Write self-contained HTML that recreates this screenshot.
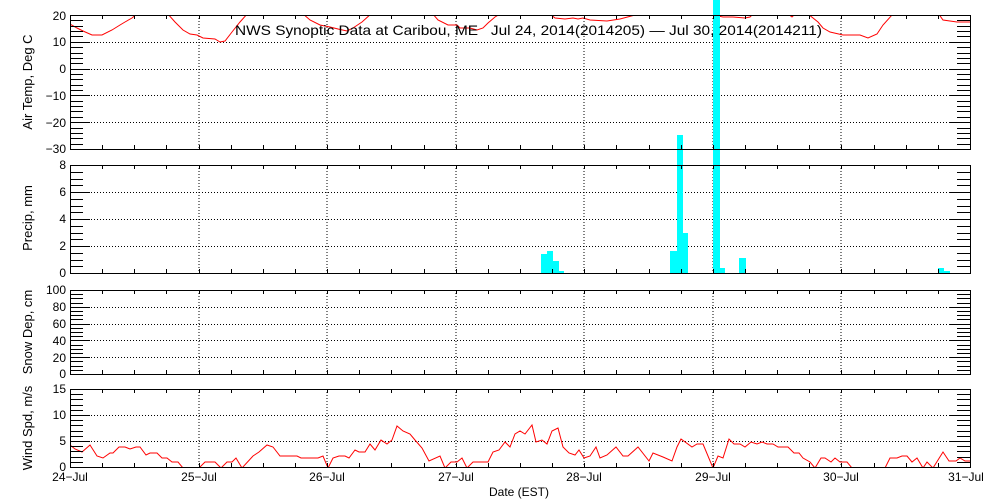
<!DOCTYPE html>
<html><head><meta charset="utf-8"><style>
html,body{margin:0;padding:0;background:#fff;width:1000px;height:500px;overflow:hidden}
svg text{font-family:"Liberation Sans",sans-serif;fill:#000}
</style></head><body>
<svg id="s" width="1000" height="500" viewBox="0 0 1000 500" xmlns="http://www.w3.org/2000/svg">
<defs>
<clipPath id="c1"><rect x="70" y="15" width="900" height="134"/></clipPath>
<clipPath id="c4"><rect x="70" y="389" width="900" height="78"/></clipPath>
</defs>
<g id="grid" stroke="#000" stroke-width="1" fill="none" shape-rendering="crispEdges"></g>
<polyline clip-path="url(#c1)" fill="none" stroke="#f00" stroke-width="1" points="70,24 77,28 83,31 92,35 102,35 112,30 120,25 125,22 132,18 138,13 167,13 175,22 183,30 190,34 197,35 203,38 215,39 220,42 225,41 232,32 240,22 248,13 302,13 310,20 320,25 330,27 338,29 347,31 353,28 362,22 372,13 432,13 438,20 448,25 457,25 460,28 470,28 477,30 483,28 488,23 495,17 500,14 550,14 555,18 565,19 573,18 578,19 583,18 590,20 607,21 620,19 635,15 638,13 690,15 713,15 723,17 733,17 745,18 750,17 753,14 788,14 792,17 795,14 808,14 818,22 823,28 830,32 843,35 860,35 868,38 877,34 883,25 892,15 894,12 938,13 943,20 957,22 967,22 970,22"/>
<g fill="#00ffff" shape-rendering="crispEdges">
<rect x="541" y="254" width="6" height="19"/>
<rect x="547" y="251" width="6" height="22"/>
<rect x="553" y="261" width="6" height="12"/>
<rect x="559" y="271" width="5" height="2"/>
<rect x="670" y="251" width="7" height="22"/>
<rect x="677" y="135" width="6" height="138"/>
<rect x="683" y="233" width="5" height="40"/>
<rect x="713" y="0" width="7" height="273"/>
<rect x="720" y="268" width="5" height="5"/>
<rect x="739" y="258" width="7" height="15"/>
<rect x="938" y="268" width="6" height="5"/>
<rect x="944" y="271" width="6" height="2"/>
</g>
<polyline clip-path="url(#c4)" fill="none" stroke="#f00" stroke-width="1" points="70,445 75,449 82,452 90,445 97,456 103,458 110,453 113,453 119,447 125,447 130,449 136,447 140,447 146,455 150,453 157,453 162,458 167,458 172,462 178,462 183,468 199,468 205,462 215,462 221,468 227,462 232,462 236,458 242,468 253,456 259,452 267,445 273,447 280,456 297,456 301,458 318,458 323,456 328,468 333,458 339,456 345,456 349,458 355,450 359,452 365,452 370,444 375,450 381,440 387,444 392,440 397,426 403,431 410,434 415,440 422,448 429,461 440,456 445,468 451,462 457,462 462,458 467,468 473,462 488,462 493,452 499,450 505,442 510,447 515,434 520,431 525,434 532,425 536,442 542,440 547,444 552,431 558,428 563,447 569,453 575,455 579,450 584,458 590,456 596,447 600,458 607,455 616,447 623,456 628,456 638,447 649,461 653,453 663,457 672,461 677,447 681,439 692,447 697,444 703,444 713,468 718,456 723,458 729,439 734,444 740,444 745,447 751,442 757,444 762,442 767,444 773,444 778,447 788,447 794,453 799,453 803,458 810,462 815,468 821,458 825,458 831,462 835,458 840,462 847,462 852,468 885,468 890,458 897,458 902,456 907,456 912,462 917,458 923,468 927,462 933,468 943,452 949,461 956,461 960,458 965,461 970,461"/>
<g id="frames" stroke="#000" stroke-width="1" fill="none" shape-rendering="crispEdges"></g>
<text x="235" y="35" font-size="14" textLength="587" lengthAdjust="spacingAndGlyphs" xml:space="preserve">NWS Synoptic Data at Caribou, ME   Jul 24, 2014(2014205) — Jul 30, 2014(2014211)</text>
<g font-size="12" text-anchor="end">
<text x="66" y="20">20</text><text x="66" y="46">10</text><text x="66" y="73">0</text><text x="66" y="100">−10</text><text x="66" y="127">−20</text><text x="66" y="153">−30</text>
<text x="66" y="169">8</text><text x="66" y="196">6</text><text x="66" y="223">4</text><text x="66" y="250">2</text><text x="66" y="277">0</text>
<text x="66" y="294">100</text><text x="66" y="311">80</text><text x="66" y="328">60</text><text x="66" y="345">40</text><text x="66" y="362">20</text><text x="66" y="378">0</text>
<text x="66" y="393">15</text><text x="66" y="419">10</text><text x="66" y="445">5</text><text x="66" y="471">0</text>
</g>
<g font-size="12" text-anchor="middle">
<text x="70" y="481">24−Jul</text><text x="199" y="481">25−Jul</text><text x="327" y="481">26−Jul</text><text x="456" y="481">27−Jul</text><text x="584" y="481">28−Jul</text><text x="713" y="481">29−Jul</text><text x="841" y="481">30−Jul</text><text x="966" y="481">31−Jul</text>
<text x="519" y="496">Date (EST)</text>
</g>
<g font-size="13" text-anchor="middle">
<text transform="translate(32,82) rotate(-90)">Air Temp, Deg C</text>
<text transform="translate(32,218) rotate(-90)">Precip, mm</text>
<text transform="translate(32,332) rotate(-90)">Snow Dep, cm</text>
<text transform="translate(32,428) rotate(-90)">Wind Spd, m/s</text>
</g>
</svg>
<script>
var NS="http://www.w3.org/2000/svg",g=document.getElementById("grid"),f=document.getElementById("frames");
function L(p,x1,y1,x2,y2,d){var l=document.createElementNS(NS,"line");l.setAttribute("x1",x1);l.setAttribute("y1",y1);l.setAttribute("x2",x2);l.setAttribute("y2",y2);if(d)l.setAttribute("stroke-dasharray","1 2");p.appendChild(l);}
var X0=70,X1=970,days=[199,327,456,584,713,841];
var P=[[15,149,20,-30,2,10],[165,273,8,0,0.5,2],[290,374,100,0,5,20],[389,467,15,0,1,5]];
P.forEach(function(p){var t=p[0],b=p[1],mx=p[2],mn=p[3],ms=p[4],Ms=p[5];
 var sc=(b-t)/(mx-mn);
 days.forEach(function(x){L(g,x,t,x,b,1);});
 for(var v=mn+Ms;v<mx-1e-6;v+=Ms){var y=Math.round(b-(v-mn)*sc)+0.5;L(g,X0,y,X1,y,1);}
 for(var v=mn;v<=mx+1e-6;v+=ms){var y=Math.round(b-(v-mn)*sc)+0.5;
   var maj=Math.abs(((v-mn)/Ms)-Math.round((v-mn)/Ms))<1e-6;var len=maj?20:13;
   L(f,X0,y,X0+len,y);L(f,X1-len,y,X1,y);}
 for(var k=1;k<28;k++){var x=Math.round(X0+k*900/28)+0.5;L(f,x,t,x,t+4);L(f,x,b-4,x,b);}
 var r=document.createElementNS(NS,"rect");r.setAttribute("x",X0+0.5);r.setAttribute("y",t+0.5);r.setAttribute("width",X1-X0);r.setAttribute("height",b-t);f.appendChild(r);
});
</script>
</body></html>
